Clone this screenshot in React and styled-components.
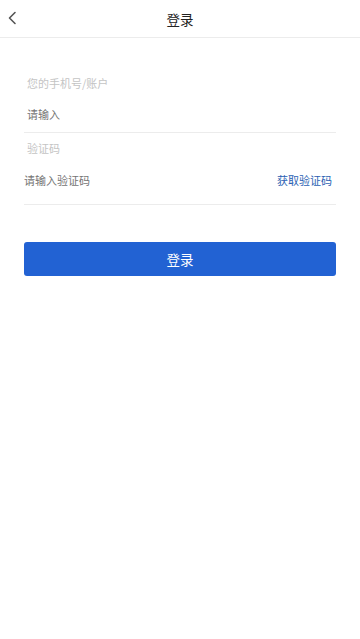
import React, { useState } from "react";
import styled, { createGlobalStyle } from "styled-components";

const GlobalStyle = createGlobalStyle`
  html, body {
    margin: 0;
    padding: 0;
    background: #fff;
    font-family: "Noto Sans CJK SC", "Noto Sans", sans-serif;
  }
  * { box-sizing: border-box; }
`;

const Page = styled.div`
  width: 360px;
  min-height: 639px;
  background: #fff;
`;

const Header = styled.header`
  height: 38px;
  display: flex;
  align-items: center;
  justify-content: center;
  position: relative;
  border-bottom: 1px solid #ececec;
`;

const BackButton = styled.button`
  position: absolute;
  left: 0;
  top: 6px;
  width: 24px;
  height: 24px;
  padding: 0;
  border: 0;
  background: none;
  display: flex;
  align-items: center;
  justify-content: center;
`;

const Title = styled.h1`
  margin: 0;
  font-size: 13.5px;
  font-weight: 400;
  color: #222;
`;

const Form = styled.form`
  padding: 37px 24px 0;
  display: flex;
  flex-direction: column;
`;

const Label = styled.div`
  font-size: 11px;
  line-height: 16px;
  color: #c4c4c4;
  padding-left: 3px;
  margin-top: ${(p) => (p.$first ? "0" : "7px")};
`;

const Row = styled.div`
  display: flex;
  align-items: center;
  padding: ${(p) => p.$top || "15px"} 0 ${(p) => p.$bottom || "10px"};
  border-bottom: 1px solid #ececec;
`;

const Input = styled.input`
  flex: 1;
  border: 0;
  outline: none;
  padding: 0 0 0 ${(p) => p.$indent || "3px"};
  height: 16px;
  font-size: 11px;
  font-family: inherit;
  color: #333;
  background: transparent;
  &::placeholder {
    color: #747474;
  }
`;

const CodeLink = styled.span`
  font-size: 11px;
  line-height: 16px;
  color: #2b5fb3;
  padding-right: 4px;
`;

const SubmitButton = styled.button`
  margin-top: 37px;
  height: 34px;
  border: 0;
  border-radius: 3px;
  background: #2262d3;
  color: #fff;
  font-size: 13.5px;
  font-family: inherit;
`;

export default function App() {
  const [phone, setPhone] = useState("");
  const [code, setCode] = useState("");

  return (
    <Page>
      <GlobalStyle />
      <Header>
        <BackButton type="button">
          <svg width="10" height="14" viewBox="0 0 10 14">
            <path d="M8 1.5 L2.5 7 L8 12.5" fill="none" stroke="#555" strokeWidth="1.6" strokeLinecap="round" strokeLinejoin="round" />
          </svg>
        </BackButton>
        <Title>登录</Title>
      </Header>
      <Form onSubmit={(e) => e.preventDefault()}>
        <Label $first>您的手机号/账户</Label>
        <Row>
          <Input placeholder="请输入" value={phone} onChange={(e) => setPhone(e.target.value)} />
        </Row>
        <Label>验证码</Label>
        <Row $top="16px" $bottom="16px">
          <Input $indent="0" placeholder="请输入验证码" value={code} onChange={(e) => setCode(e.target.value)} />
          <CodeLink>获取验证码</CodeLink>
        </Row>
        <SubmitButton type="submit">登录</SubmitButton>
      </Form>
    </Page>
  );
}
